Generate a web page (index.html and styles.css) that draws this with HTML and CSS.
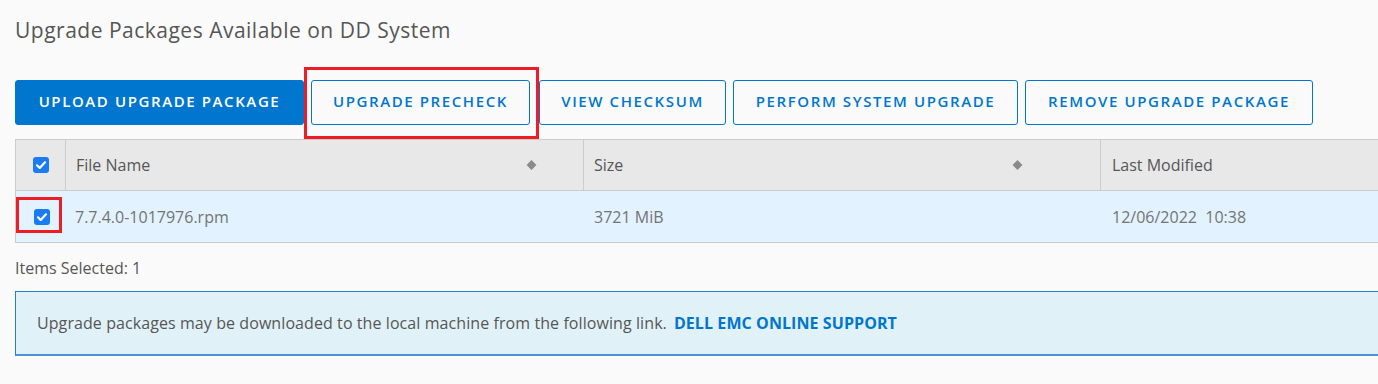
FILE: index.html
```html
<!DOCTYPE html>
<html>
<head>
<meta charset="utf-8">
<link rel="stylesheet" href="styles.css">
</head>
<body>
<div class="page">
  <h1 class="title">Upgrade Packages Available on DD System</h1>
  <div class="toolbar">
    <button class="btn btn-primary b-upload">UPLOAD UPGRADE PACKAGE</button>
    <div class="highlight-wrap">
      <button class="btn btn-outline b-precheck">UPGRADE PRECHECK</button>
      <span class="annot annot-btn"></span>
    </div>
    <button class="btn btn-outline b-checksum">VIEW CHECKSUM</button>
    <button class="btn btn-outline b-perform">PERFORM SYSTEM UPGRADE</button>
    <button class="btn btn-outline b-remove">REMOVE UPGRADE PACKAGE</button>
  </div>
  <div class="grid">
    <div class="row head">
      <div class="cell c-check"><span class="cb"><svg viewBox="0 0 16 16" width="16" height="16"><path d="M4 8.3l2.7 2.6L12 5.3" fill="none" stroke="#fff" stroke-width="2.2" stroke-linecap="round" stroke-linejoin="round"/></svg></span></div>
      <div class="cell c-name">File Name<span class="sort sort-name"></span></div>
      <div class="cell c-size">Size<span class="sort sort-size"></span></div>
      <div class="cell c-mod">Last Modified</div>
    </div>
    <div class="row body selected">
      <div class="cell c-check"><span class="cb"><svg viewBox="0 0 16 16" width="16" height="16"><path d="M4 8.3l2.7 2.6L12 5.3" fill="none" stroke="#fff" stroke-width="2.2" stroke-linecap="round" stroke-linejoin="round"/></svg></span><span class="annot annot-cb"></span></div>
      <div class="cell c-name">7.7.4.0-1017976.rpm</div>
      <div class="cell c-size">3721 MiB</div>
      <div class="cell c-mod">12/06/2022&nbsp; 10:38</div>
    </div>
  </div>
  <div class="selected-count">Items Selected: 1</div>
  <div class="info">
    <span>Upgrade packages may be downloaded to the local machine from the following link.</span>
    <a class="link" href="#">DELL EMC ONLINE SUPPORT</a>
  </div>
</div>
</body>
</html>
```
FILE: styles.css
```css
html, body {
  margin: 0;
  padding: 0;
  background: #fafafa;
  overflow: hidden;
}
body {
  width: 1378px;
  height: 384px;
  font-family: "Open Sans", "Noto Sans", sans-serif;
  color: #565656;
}
.page {
  padding: 16px 0 0 15px;
  width: 1420px;
}
.title {
  margin: 0;
  font-size: 21px;
  font-weight: 400;
  line-height: 28px;
  color: #565656;
  letter-spacing: 0.5px;
}
.toolbar {
  display: flex;
  gap: 7px;
  margin-top: 36px;
  height: 45px;
}
.btn {
  height: 45px;
  box-sizing: border-box;
  border-radius: 3px;
  font-family: "Open Sans", sans-serif;
  font-size: 15px;
  font-weight: 600;
  letter-spacing: 1.6px;
  padding: 0 0 3px 0;
  cursor: pointer;
  text-align: center;
}
.btn-primary {
  background: #0076ce;
  border: 1px solid #0076ce;
  color: #fff;
}
.btn-outline {
  background: #fafafa;
  border: 1px solid #0076ce;
  color: #0076ce;
}
.b-upload { width: 289px; }
.b-precheck { width: 219px; }
.b-checksum { width: 187px; margin-left: 2px; }
.b-perform { width: 285px; }
.b-remove { width: 288px; }
.highlight-wrap {
  position: relative;
  display: flex;
}
.annot {
  position: absolute;
  border: 3px solid #ee1c25;
  box-sizing: border-box;
  pointer-events: none;
}
.annot-btn {
  left: -7px;
  top: -13px;
  width: 235px;
  height: 72px;
}
.grid {
  margin-top: 14px;
  border: 1px solid #cccccc;
  width: 1400px;
  box-sizing: border-box;
}
.row {
  display: flex;
}
.head {
  background: #e8e8e8;
  height: 51px;
  border-bottom: 1px solid #cccccc;
  box-sizing: border-box;
}
.body {
  height: 51px;
}
.selected { background: #e3f2ff; }
.cell {
  display: flex;
  align-items: center;
  box-sizing: border-box;
  font-size: 16px;
  position: relative;
}
.head .cell { color: #565656; }
.body .cell { color: #747474; }
.c-check {
  width: 50px;
  justify-content: center;
}
.head .c-check, .head .c-name, .head .c-size {
  border-right: 1px solid #cccccc;
}
.c-name { width: 518px; padding-left: 10px; }
.c-size { width: 517px; padding-left: 10px; }
.c-mod { flex: 1; padding-left: 11px; }
.body .c-name { padding-left: 9px; }
.cb {
  width: 16px;
  height: 16px;
  background: #1a7cf2;
  border-radius: 3px;
  display: flex;
  align-items: center;
  justify-content: center;
  margin-left: 1px;
}
.sort {
  position: absolute;
  top: 50%;
  width: 7px;
  height: 7px;
  background: #8a8a8a;
  transform: translateY(-50%) rotate(45deg);
}
.sort-name { right: 48px; }
.sort-size { right: 79px; }
.annot-cb {
  left: 0px;
  top: 6px;
  width: 46px;
  height: 36px;
}
.selected-count {
  margin-top: 15px;
  font-size: 16px;
  color: #565656;
  line-height: 20px;
}
.info {
  margin-top: 13px;
  width: 1400px;
  box-sizing: border-box;
  height: 65px;
  background: #e1f1f8;
  border: 1px solid #2a7fc4;
  border-bottom: 2px solid #4a94d4;
  padding-left: 21px;
  display: flex;
  align-items: center;
  font-size: 16px;
  color: #565656;
  letter-spacing: 0.08px;
}
.link {
  margin-left: 7px;
  color: #0076ce;
  font-weight: 700;
  text-decoration: none;
}
```
